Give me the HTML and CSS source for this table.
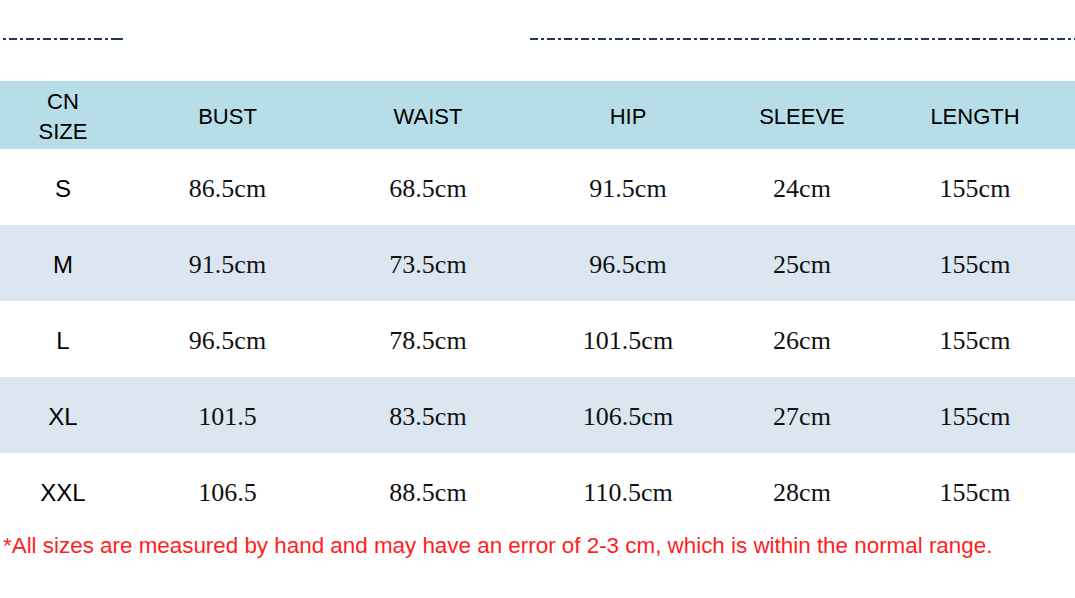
FILE: index.html
```html
<!DOCTYPE html>
<html lang="en">
<head>
<meta charset="utf-8">
<title>Size chart</title>
<link rel="stylesheet" href="styles.css">
</head>
<body>
<div class="top">
  <div class="rule rule-left"></div>
  <div class="rule rule-right"></div>
</div>
<table class="chart">
  <colgroup>
    <col class="c1"><col class="c2"><col class="c3"><col class="c4"><col class="c5"><col class="c6">
  </colgroup>
  <thead>
    <tr class="head">
      <th>CN<br>SIZE</th><th>BUST</th><th>WAIST</th><th>HIP</th><th>SLEEVE</th><th>LENGTH</th>
    </tr>
  </thead>
  <tbody>
    <tr><td class="size">S</td><td>86.5cm</td><td>68.5cm</td><td>91.5cm</td><td>24cm</td><td>155cm</td></tr>
    <tr class="alt"><td class="size">M</td><td>91.5cm</td><td>73.5cm</td><td>96.5cm</td><td>25cm</td><td>155cm</td></tr>
    <tr><td class="size">L</td><td>96.5cm</td><td>78.5cm</td><td>101.5cm</td><td>26cm</td><td>155cm</td></tr>
    <tr class="alt"><td class="size">XL</td><td>101.5</td><td>83.5cm</td><td>106.5cm</td><td>27cm</td><td>155cm</td></tr>
    <tr><td class="size">XXL</td><td>106.5</td><td>88.5cm</td><td>110.5cm</td><td>28cm</td><td>155cm</td></tr>
  </tbody>
</table>
<p class="note">*All sizes are measured by hand and may have an error of 2-3 cm, which is within the normal range.</p>
</body>
</html>
```
FILE: styles.css
```css
html, body {
  margin: 0;
  padding: 0;
  background: #ffffff;
}
body {
  width: 1075px;
  font-family: "Liberation Sans", Arial, sans-serif;
}
.top {
  height: 81px;
  display: flex;
  align-items: flex-start;
}
.rule {
  height: 2px;
  margin-top: 38px;
  background-image: repeating-linear-gradient(90deg,
    #1f3a58 0 8px, transparent 8px 11px,
    #1f3a58 11px 14px, transparent 14px 17px);
}
.rule-left {
  margin-left: 3px;
  width: 123px;
  background-position: -11px 0;
}
.rule-right {
  margin-left: 404px;
  flex: 1;
}
.chart {
  width: 1075px;
  table-layout: fixed;
  border-collapse: collapse;
  border-spacing: 0;
}
.c1 { width: 126px; }
.c2 { width: 203px; }
.c3 { width: 198px; }
.c4 { width: 202px; }
.c5 { width: 146px; }
.c6 { width: 200px; }
.chart th, .chart td {
  padding: 4px 0 0;
  text-align: center;
  vertical-align: middle;
}
.head {
  height: 68px;
  background: #b7dee8;
}
.chart th {
  font-weight: normal;
  font-size: 22px;
  line-height: 30px;
  color: #000;
}
.chart tbody tr {
  height: 76px;
}
.chart tbody tr.alt {
  background: #dce6f1;
}
.chart td {
  font-family: "Liberation Serif", "Times New Roman", serif;
  font-size: 26px;
  color: #111;
}
.chart td.size {
  font-family: "Liberation Sans", Arial, sans-serif;
  font-size: 24px;
  color: #000;
}
.note {
  margin: 4px 0 0;
  padding-left: 3px;
  font-size: 22.4px;
  line-height: 26px;
  color: #ff1e1e;
  white-space: nowrap;
}
```
